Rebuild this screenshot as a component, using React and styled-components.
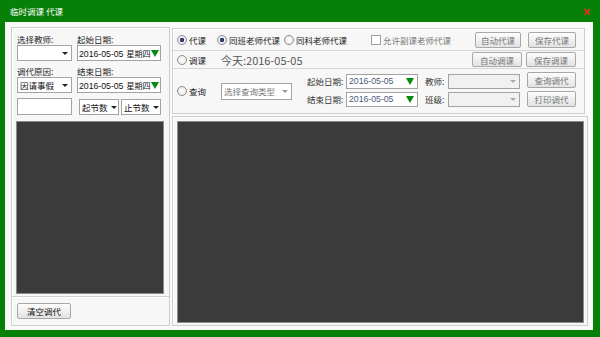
import React from 'react'
import styled, { createGlobalStyle } from 'styled-components'

const GlobalStyle = createGlobalStyle`
  html, body {
    margin: 0;
    padding: 0;
    background: #078007;
  }
  * { box-sizing: border-box; }
`

const Window = styled.div`
  width: 600px;
  height: 337px;
  background: #078007;
  font-family: "Noto Sans CJK SC", "Liberation Sans", sans-serif;
  font-size: 8.5px;
  color: #222;
  display: flex;
  flex-direction: column;
`

const TitleBar = styled.div`
  height: 22px;
  display: flex;
  align-items: center;
  justify-content: space-between;
  padding: 0 10px 0 10px;
  color: #fff;
  font-size: 8.5px;
`

const Close = styled.span`
  color: #ff2020;
  font-family: "Liberation Sans", sans-serif;
  font-weight: bold;
  font-size: 12px;
  margin-top: 1px;
`

const Body = styled.div`
  flex: 1;
  margin: 0 7px 7px 5px;
  background: #fafafa;
  padding: 5px 5px 4px 6px;
  display: flex;
  gap: 2px;
`

const Panel = styled.div`
  border: 1px solid #cdcdcd;
  box-shadow: inset 1px 1px 0 #fff;
  background: #f7f7f7;
  display: flex;
  flex-direction: column;
`

const LeftPanel = styled(Panel)`
  width: 159px;
`

const FormGrid = styled.div`
  display: grid;
  grid-template-columns: 55px 84px;
  column-gap: 5px;
  padding: 5px 0 0 5px;
`

const Label = styled.div`
  height: 12px;
  line-height: 12px;
  margin-top: ${p => p.$mt || 0}px;
  white-space: nowrap;
`

const Field = styled.div`
  height: ${p => p.$h || 16}px;
  margin-top: ${p => p.$mt || 0}px;
  width: ${p => p.$w ? p.$w + 'px' : 'auto'};
  border: 1px solid #a3a3a3;
  background: ${p => p.$disabled ? '#f1f1f1' : '#fff'};
  display: flex;
  align-items: center;
  justify-content: space-between;
  padding: 0 ${p => p.$pr ?? 3}px 0 ${p => p.$pl ?? 2}px;
  white-space: nowrap;
  overflow: hidden;
  color: ${p => p.$muted ? '#777' : '#111'};
`

const DateText = styled.span`
  font-family: "Liberation Sans", sans-serif;
  font-size: 8.7px;
  color: ${p => p.$muted ? '#4a5a78' : '#111'};
  & b {
    font-family: "Noto Sans CJK SC", sans-serif;
    font-weight: normal;
    font-size: 8px;
    margin-left: 3px;
  }
`

const Caret = styled.span`
  width: 0;
  height: 0;
  border-left: 3px solid transparent;
  border-right: 3px solid transparent;
  border-top: 3px solid ${p => p.$color || '#222'};
  margin-left: 3px;
  flex-shrink: 0;
`

const GreenArrow = styled.span`
  width: 0;
  height: 0;
  border-left: 4px solid transparent;
  border-right: 4px solid transparent;
  border-top: 7px solid #0a8a0a;
  flex-shrink: 0;
`

const SplitRow = styled.div`
  display: flex;
  justify-content: flex-end;
  gap: 2px;
  margin-top: 6px;
`

const DarkBox = styled.div`
  flex: 1;
  background: #3b3b3b;
  border: 1px solid #8c8c8c;
  margin: ${p => p.$m};
`

const LeftFooter = styled.div`
  border-top: 1px solid #cfcfcf;
  box-shadow: inset 0 1px 0 #fff;
  margin-top: 2px;
  padding: 6px 0 6px 5px;
`

const Button = styled.div`
  width: ${p => p.$w || 47}px;
  height: ${p => p.$h || 16}px;
  border: 1px solid #a8a8a8;
  border-radius: 2px;
  background: linear-gradient(#fdfdfd, #e2e2e2);
  display: flex;
  align-items: center;
  justify-content: center;
  color: ${p => p.$dark ? '#111' : '#777'};
  white-space: nowrap;
  flex-shrink: 0;
`

const RightColumn = styled.div`
  flex: 1;
  display: flex;
  flex-direction: column;
  gap: 2px;
`

const TopPanel = styled(Panel)`
  height: 86px;
  margin-right: 3px;
  margin-top: 1px;
`

const Row = styled.div`
  height: ${p => p.$h}px;
  flex: ${p => p.$grow ? 1 : 'none'};
  display: flex;
  align-items: center;
  padding: 0 8px 0 4px;
  border-bottom: ${p => p.$last ? 'none' : '1px solid #d6d6d6'};
`

const RadioItem = styled.div`
  width: ${p => p.$w}px;
  display: flex;
  align-items: center;
  gap: 2px;
  white-space: nowrap;
  flex-shrink: 0;
`

const RadioDot = styled.span`
  width: 10px;
  height: 10px;
  border-radius: 50%;
  border: 1px solid #8d8d8d;
  background: radial-gradient(circle, ${p => p.$on ? '#2d3f63 0, #2d3f63 2px, #eef 2.5px' : '#fff 0'}, #e6e6e6 5px);
  flex-shrink: 0;
`

const CheckItem = styled.div`
  display: flex;
  align-items: center;
  gap: 2px;
  color: #777;
  white-space: nowrap;
`

const CheckBox = styled.span`
  width: 10px;
  height: 10px;
  border: 1px solid #a0a0a0;
  background: #fff;
`

const ButtonGroup = styled.div`
  margin-left: auto;
  display: flex;
  gap: ${p => p.$gap || 6}px;
`

const Today = styled.span`
  font-size: 11px;
  color: #555;
`

const QueryGrid = styled.div`
  display: grid;
  grid-template-columns: 39px 72px 30px 72px;
  row-gap: 3px;
  margin-left: 15px;
  margin-top: -2px;
  align-items: center;
`

const GridLabel = styled.div`
  padding-left: ${p => p.$pl || 0}px;
  white-space: nowrap;
  color: #333;
`

const ButtonColumn = styled.div`
  margin-left: auto;
  display: flex;
  flex-direction: column;
  gap: 3px;
  margin-top: -4px;
`

const BottomPanel = styled(Panel)`
  flex: 1;
  padding: 4px 3px 2px 4px;
`

export default function App() {
  return (
    <Window>
      <GlobalStyle />
      <TitleBar>
        <span>临时调课 代课</span>
        <Close>×</Close>
      </TitleBar>
      <Body>
        <LeftPanel>
          <FormGrid>
            <Label>选择教师:</Label>
            <Label>起始日期:</Label>
            <Field>
              <span />
              <Caret />
            </Field>
            <Field $pr={1} $pl={1}>
              <DateText>2016-05-05<b>星期四</b></DateText>
              <GreenArrow />
            </Field>
            <Label $mt={4}>调代原因:</Label>
            <Label $mt={4}>结束日期:</Label>
            <Field>
              <span>因请事假</span>
              <Caret />
            </Field>
            <Field $pr={1} $pl={1}>
              <DateText>2016-05-05<b>星期四</b></DateText>
              <GreenArrow />
            </Field>
            <Field $h={17} $mt={5} />
            <SplitRow>
              <Field $w={40} $h={16}>
                <span>起节数</span>
                <Caret />
              </Field>
              <Field $w={40} $h={16}>
                <span>止节数</span>
                <Caret />
              </Field>
            </SplitRow>
          </FormGrid>
          <DarkBox $m="6px 5px 0 4px" />
          <LeftFooter>
            <Button $w={54} $h={16} $dark>清空调代</Button>
          </LeftFooter>
        </LeftPanel>

        <RightColumn>
          <TopPanel>
            <Row $h={22}>
              <RadioItem $w={40}><RadioDot $on />代课</RadioItem>
              <RadioItem $w={67}><RadioDot $on />同班老师代课</RadioItem>
              <RadioItem $w={87}><RadioDot />同科老师代课</RadioItem>
              <CheckItem><CheckBox />允许副课老师代课</CheckItem>
              <ButtonGroup $gap={7}>
                <Button $w={46}>自动代课</Button>
                <Button $w={48}>保存代课</Button>
              </ButtonGroup>
            </Row>
            <Row $h={18}>
              <RadioItem $w={44}><RadioDot />调课</RadioItem>
              <Today>今天:2016-05-05</Today>
              <ButtonGroup $gap={4}>
                <Button $w={50} $h={15}>自动调课</Button>
                <Button $w={50} $h={15}>保存调课</Button>
              </ButtonGroup>
            </Row>
            <Row $grow $last>
              <RadioItem $w={44}><RadioDot />查询</RadioItem>
              <Field $w={71} $h={17} $muted>
                <span>选择查询类型</span>
                <Caret $color="#999" />
              </Field>
              <QueryGrid>
                <GridLabel>起始日期:</GridLabel>
                <Field $w={72} $h={15}>
                  <DateText $muted>2016-05-05</DateText>
                  <GreenArrow />
                </Field>
                <GridLabel $pl={7}>教师:</GridLabel>
                <Field $w={72} $h={15} $disabled>
                  <span />
                  <Caret $color="#aaa" />
                </Field>
                <GridLabel>结束日期:</GridLabel>
                <Field $w={72} $h={15}>
                  <DateText $muted>2016-05-05</DateText>
                  <GreenArrow />
                </Field>
                <GridLabel $pl={7}>班级:</GridLabel>
                <Field $w={72} $h={15} $disabled>
                  <span />
                  <Caret $color="#aaa" />
                </Field>
              </QueryGrid>
              <ButtonColumn>
                <Button $w={49} $h={16}>查询调代</Button>
                <Button $w={49} $h={16}>打印调代</Button>
              </ButtonColumn>
            </Row>
          </TopPanel>
          <BottomPanel>
            <DarkBox $m="0" />
          </BottomPanel>
        </RightColumn>
      </Body>
    </Window>
  )
}
